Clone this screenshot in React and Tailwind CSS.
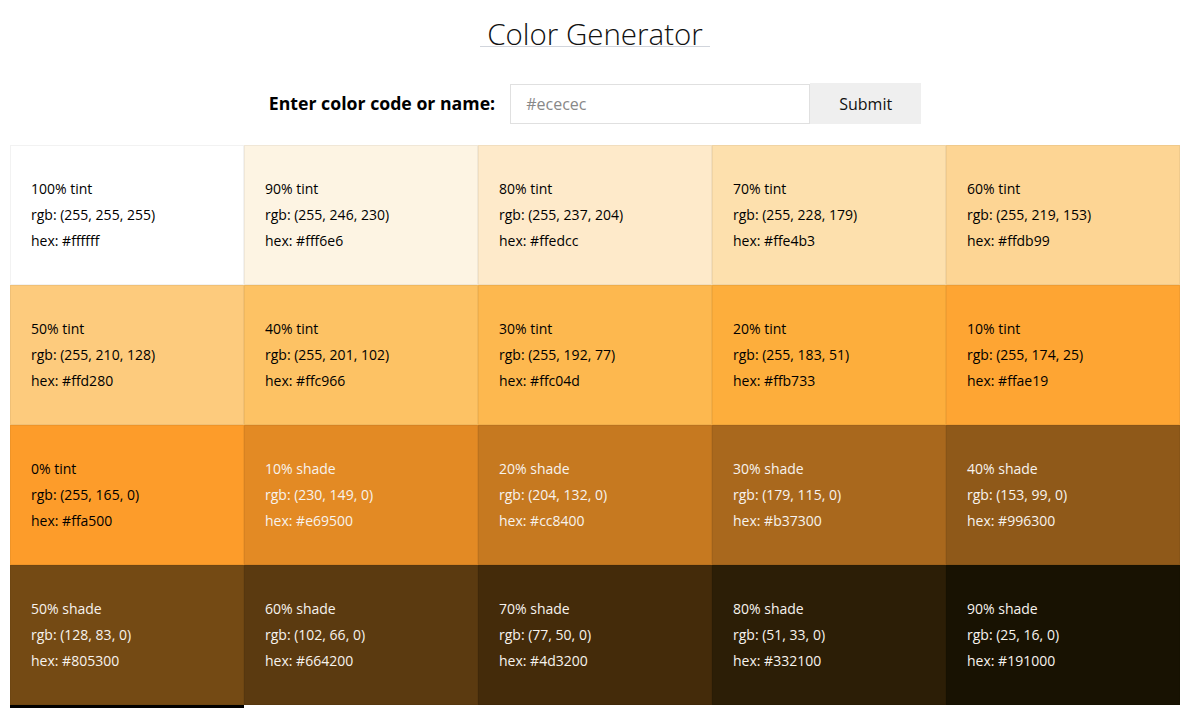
import { useState } from 'react';

// tints and shades of the base colour, lightest first
// bg is the colour as it shows on screen, hex is the value printed in the card
const swatches = [
  { label: '100% tint', rgb: [255, 255, 255], hex: '#ffffff', bg: '#ffffff' },
  { label: '90% tint', rgb: [255, 246, 230], hex: '#fff6e6', bg: '#fdf4e3' },
  { label: '80% tint', rgb: [255, 237, 204], hex: '#ffedcc', bg: '#feeaca' },
  { label: '70% tint', rgb: [255, 228, 179], hex: '#ffe4b3', bg: '#fde0ad' },
  { label: '60% tint', rgb: [255, 219, 153], hex: '#ffdb99', bg: '#fdd594' },
  { label: '50% tint', rgb: [255, 210, 128], hex: '#ffd280', bg: '#fdcb7d' },
  { label: '40% tint', rgb: [255, 201, 102], hex: '#ffc966', bg: '#fdc264' },
  { label: '30% tint', rgb: [255, 192, 77], hex: '#ffc04d', bg: '#fdb84f' },
  { label: '20% tint', rgb: [255, 183, 51], hex: '#ffb733', bg: '#fdae3c' },
  { label: '10% tint', rgb: [255, 174, 25], hex: '#ffae19', bg: '#fea533' },
  { label: '0% tint', rgb: [255, 165, 0], hex: '#ffa500', bg: '#fd9c2a' },
  { label: '10% shade', rgb: [230, 149, 0], hex: '#e69500', bg: '#e38a24', dark: true },
  { label: '20% shade', rgb: [204, 132, 0], hex: '#cc8400', bg: '#c67920', dark: true },
  { label: '30% shade', rgb: [179, 115, 0], hex: '#b37300', bg: '#a9681d', dark: true },
  { label: '40% shade', rgb: [153, 99, 0], hex: '#996300', bg: '#8f5919', dark: true },
  { label: '50% shade', rgb: [128, 83, 0], hex: '#805300', bg: '#744a14', dark: true },
  { label: '60% shade', rgb: [102, 66, 0], hex: '#664200', bg: '#5b3a10', dark: true },
  { label: '70% shade', rgb: [77, 50, 0], hex: '#4d3200', bg: '#442b0a', dark: true },
  { label: '80% shade', rgb: [51, 33, 0], hex: '#332100', bg: '#2c1e06', dark: true },
  { label: '90% shade', rgb: [25, 16, 0], hex: '#191000', bg: '#181202', dark: true },
  { label: '100% shade', rgb: [0, 0, 0], hex: '#000000', bg: '#000000', dark: true },
];

function Swatch({ swatch }) {
  return (
    <div
      className={`h-[140px] border border-black/5 pl-[20px] flex flex-col justify-center text-[14px] font-medium leading-[26px] ${
        swatch.dark ? 'text-[#f7f3ee]' : 'text-black'
      }`}
      style={{ backgroundColor: swatch.bg }}
    >
      <p>{swatch.label}</p>
      <p>rgb: ({swatch.rgb.join(', ')})</p>
      <p>hex: {swatch.hex}</p>
    </div>
  );
}

export default function App() {
  const [color, setColor] = useState('');

  return (
    <div className="min-h-screen bg-white font-['Open_Sans',sans-serif] text-black">
      <div className="pt-[22px] flex justify-center">
        <h1 className="px-[7px] text-[29.5px] font-light leading-[24px] text-[#111] border-b border-gray-300">
          Color Generator
        </h1>
      </div>

      <form
        className="mt-[36px] flex justify-center items-center"
        onSubmit={(e) => e.preventDefault()}
      >
        <label className="mr-[15px] text-[17.7px] font-bold">Enter color code or name:</label>
        <input
          value={color}
          onChange={(e) => setColor(e.target.value)}
          placeholder="#ececec"
          className="w-[300px] h-[40px] border border-[#e0e0e0] px-[15px] text-[16px] outline-none placeholder:text-[#888]"
        />
        <button className="w-[111px] h-[41px] bg-[#efefef] text-[16px] text-[#111]">Submit</button>
      </form>

      <div className="mt-[21px] mx-[10px] grid grid-cols-5">
        {swatches.map((s) => (
          <Swatch key={s.label} swatch={s} />
        ))}
      </div>
    </div>
  );
}
